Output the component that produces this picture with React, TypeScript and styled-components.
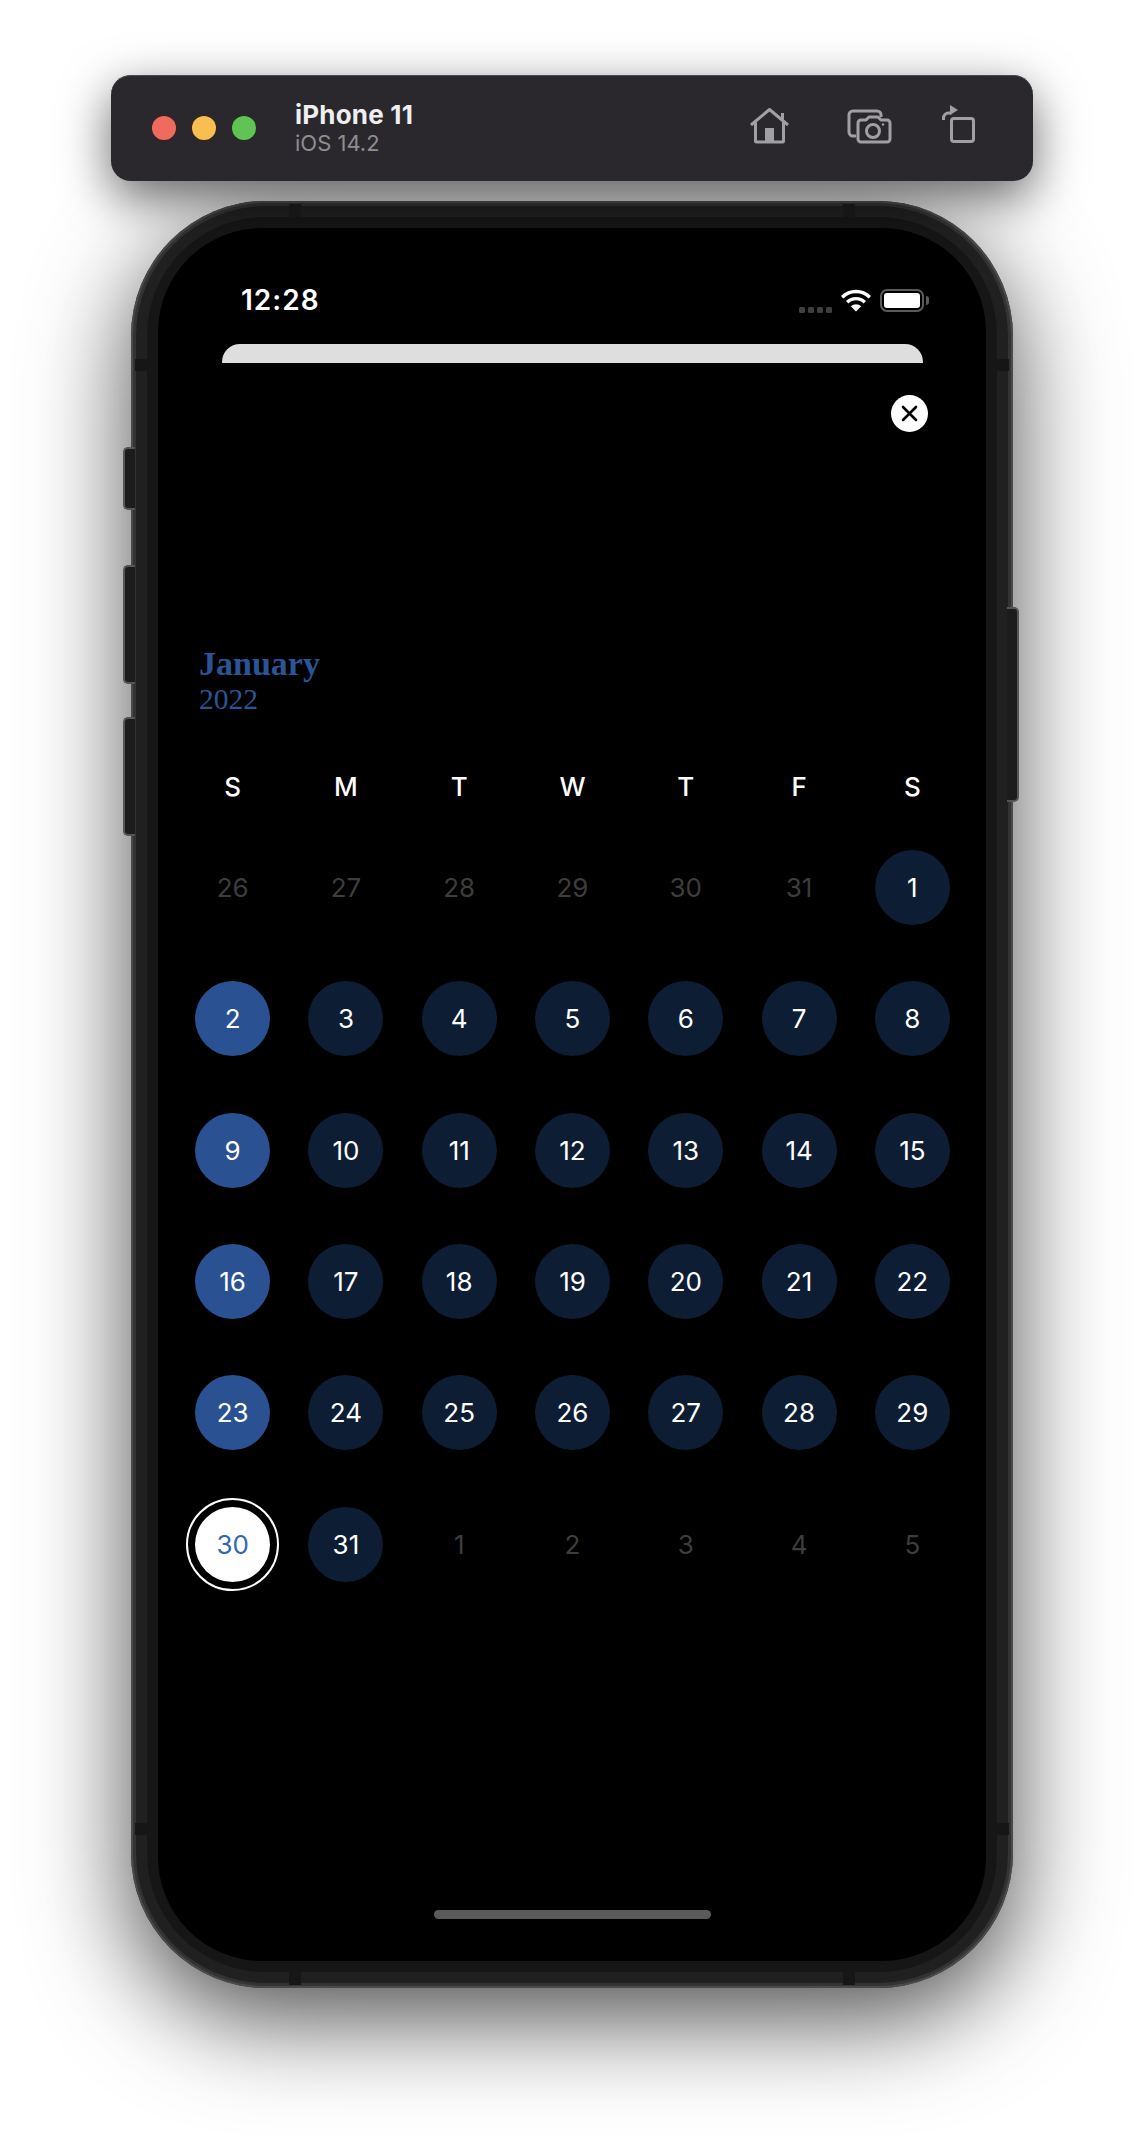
import React from "react";
import styled, { createGlobalStyle } from "styled-components";

const WEEKDAYS = ["S", "M", "T", "W", "T", "F", "S"];

type DayKind = "muted" | "plain" | "selected" | "today";
type Day = { label: number; kind: DayKind };

const buildDays = (): Day[] => {
  const days: Day[] = [];
  [26, 27, 28, 29, 30, 31].forEach((label) => days.push({ label, kind: "muted" }));
  for (let label = 1; label <= 31; label++) {
    let kind: DayKind = "plain";
    if (label === 30) kind = "today";
    else if ([2, 9, 16, 23].includes(label)) kind = "selected";
    days.push({ label, kind });
  }
  [1, 2, 3, 4, 5].forEach((label) => days.push({ label, kind: "muted" }));
  return days;
};

function HomeIcon() {
  return (
    <ToolSvg width="39" height="38" viewBox="0 0 39 38" $gap={0}>
      <path d="M1 20 19.500 4.500 38 20" />
      <path d="M32.500 15V8" />
      <path d="M5.500 17v19a1 1 0 0 0 1 1h26a1 1 0 0 0 1-1V17" />
      <rect x="15" y="23" width="9" height="13" fill="#a09fa2" stroke="none" />
    </ToolSvg>
  );
}

function CameraIcon() {
  return (
    <ToolSvg width="43" height="38" viewBox="0 0 43 38" $gap={59}>
      <path d="M8 31H5a4 4 0 0 1-4-4V10a4 4 0 0 1 4-4h24a4 4 0 0 1 4 4v2" />
      <path d="M13 15h5l3-3h9l3 3h6a3 3 0 0 1 3 3v16a3 3 0 0 1-3 3H13a3 3 0 0 1-3-3V18a3 3 0 0 1 3-3z" />
      <circle cx="25" cy="26" r="6.500" />
      <circle cx="35" cy="19.500" r="1.200" fill="#a09fa2" stroke="none" />
    </ToolSvg>
  );
}

function RotateIcon() {
  return (
    <ToolSvg width="33" height="38" viewBox="0 0 33 38" $gap={51}>
      <rect x="9.500" y="13.500" width="22" height="23" rx="2.500" />
      <path d="M1.500 15v-2a5 5 0 0 1 5-5h3" />
      <path d="M8 0l8 5-8 5z" fill="#a09fa2" stroke="none" />
    </ToolSvg>
  );
}

function WifiIcon() {
  return (
    <svg width="30" height="23" viewBox="0 0 30 23" fill="none">
      <path d="M1.200 8.200a19.500 19.500 0 0 1 27.600 0" stroke="#fff" strokeWidth="3.400" />
      <path d="M6.200 13.200a12.500 12.500 0 0 1 17.600 0" stroke="#fff" strokeWidth="3.400" />
      <path d="M15 22.500 9.800 17.300a7.400 7.400 0 0 1 10.400 0z" fill="#fff" />
    </svg>
  );
}

function CloseIcon() {
  return (
    <svg width="17" height="17" viewBox="0 0 17 17" fill="none">
      <path d="M2 2l13 13M15 2 2 15" stroke="#000" strokeWidth="2.600" strokeLinecap="round" />
    </svg>
  );
}

function App() {
  return (
    <Page>
      <GlobalStyle />
      <Toolbar>
        <Lights>
          <Light $color="#f16a5e" />
          <Light $color="#f6bf4f" />
          <Light $color="#5fc454" />
        </Lights>
        <DeviceInfo>
          <DeviceName>iPhone 11</DeviceName>
          <DeviceOs>iOS 14.2</DeviceOs>
        </DeviceInfo>
        <Actions>
          <HomeIcon />
          <CameraIcon />
          <RotateIcon />
        </Actions>
      </Toolbar>

      <Device>
        <SideButton $side="left" $top={246} $height={63} />
        <SideButton $side="left" $top={364} $height={119} />
        <SideButton $side="left" $top={516} $height={119} />
        <SideButton $side="right" $top={406} $height={195} />
        <AntennaH $edge="top" $left={158} />
        <AntennaH $edge="top" $left={712} />
        <AntennaH $edge="bottom" $left={158} />
        <AntennaH $edge="bottom" $left={712} />
        <AntennaV $side="left" $top={158} />
        <AntennaV $side="right" $top={158} />
        <AntennaV $side="left" $top={1622} />
        <AntennaV $side="right" $top={1622} />

        <Bezel>
          <InnerBezel>
            <Screen>
              <StatusBar>
                <Time>12:28</Time>
                <StatusIcons>
                  <Signal>
                    <SignalDot />
                    <SignalDot />
                    <SignalDot />
                    <SignalDot />
                  </Signal>
                  <WifiIcon />
                  <Battery>
                    <BatteryFill />
                  </Battery>
                </StatusIcons>
              </StatusBar>

              <SheetEdge />

              <CloseRow>
                <CloseButton>
                  <CloseIcon />
                </CloseButton>
              </CloseRow>

              <Heading>
                <Month>January</Month>
                <Year>2022</Year>
              </Heading>

              <Weekdays>
                {WEEKDAYS.map((day, i) => (
                  <Weekday key={i}>{day}</Weekday>
                ))}
              </Weekdays>

              <DayGrid>
                {buildDays().map((day, i) => (
                  <DayCell key={i}>
                    <DayCircle $kind={day.kind}>{day.label}</DayCircle>
                  </DayCell>
                ))}
              </DayGrid>

              <HomeIndicator />
            </Screen>
          </InnerBezel>
        </Bezel>
      </Device>
    </Page>
  );
}

const GlobalStyle = createGlobalStyle`
  html, body {
    margin: 0;
    background: #fff;
  }
  body {
    font-family: Inter, "Liberation Sans", sans-serif;
    overflow: hidden;
  }
`;

const Page = styled.div`
  height: 2138px;
  padding-top: 75px;
  box-sizing: border-box;
  display: flex;
  flex-direction: column;
  align-items: center;
  overflow: hidden;
`;

const Toolbar = styled.div`
  position: relative;
  z-index: 1;
  width: 922px;
  height: 106px;
  box-sizing: border-box;
  padding: 0 58px 0 41px;
  display: flex;
  align-items: center;
  background: #2a282c;
  border-radius: 20px;
  box-shadow: inset 0 1px 0 #4c4a4e, 0 16px 50px rgba(0, 0, 0, 0.6);
`;

const Lights = styled.div`
  display: flex;
  gap: 16px;
`;

const Light = styled.span<{ $color: string }>`
  width: 24px;
  height: 24px;
  border-radius: 50%;
  background: ${(p) => p.$color};
`;

const DeviceInfo = styled.div`
  margin-left: 39px;
  display: flex;
  flex-direction: column;
`;

const DeviceName = styled.div`
  color: #efeff0;
  font-size: 26px;
  line-height: 30px;
  font-weight: 700;
  letter-spacing: 0.2px;
`;

const DeviceOs = styled.div`
  color: #8e8d90;
  font-size: 22px;
  line-height: 27px;
`;

const Actions = styled.div`
  margin-left: auto;
  margin-bottom: 8px;
  display: flex;
`;

const ToolSvg = styled.svg<{ $gap: number }>`
  margin-left: ${(p) => p.$gap}px;
  fill: none;
  stroke: #a09fa2;
  stroke-width: 3;
  stroke-linejoin: round;
  overflow: visible;
`;

const Device = styled.div`
  position: relative;
  margin-top: 20px;
  width: 882px;
  height: 1787px;
  box-sizing: border-box;
  padding: 5px;
  background: #333;
  border-radius: 135px;
  box-shadow: inset 0 0 0 2px #4a4a4a, 0 30px 100px rgba(0, 0, 0, 0.7);
`;

const SideButton = styled.div<{ $side: "left" | "right"; $top: number; $height: number }>`
  position: absolute;
  top: ${(p) => p.$top}px;
  ${(p) => p.$side}: ${(p) => (p.$side === "left" ? -8 : -6)}px;
  width: 12px;
  height: ${(p) => p.$height}px;
  box-sizing: border-box;
  background: #1c1c1c;
  border: 2px solid #555;
  border-${(p) => (p.$side === "left" ? "right" : "left")}: none;
  border-radius: ${(p) => (p.$side === "left" ? "5px 0 0 5px" : "0 5px 5px 0")};
`;

const AntennaH = styled.div<{ $edge: "top" | "bottom"; $left: number }>`
  position: absolute;
  ${(p) => p.$edge}: 3px;
  left: ${(p) => p.$left}px;
  width: 12px;
  height: 13px;
  background: #161616;
  z-index: 1;
`;

const AntennaV = styled.div<{ $side: "left" | "right"; $top: number }>`
  position: absolute;
  ${(p) => p.$side}: 4px;
  top: ${(p) => p.$top}px;
  width: 12px;
  height: 12px;
  background: #161616;
  z-index: 1;
`;

const Bezel = styled.div`
  height: 100%;
  box-sizing: border-box;
  padding: 11px;
  background: #202020;
  border-radius: 130px;
`;

const InnerBezel = styled.div`
  height: 100%;
  box-sizing: border-box;
  padding: 11px;
  background: #161616;
  border-radius: 118px;
`;

const Screen = styled.div`
  height: 100%;
  background: #000;
  border-radius: 104px;
  display: flex;
  flex-direction: column;
`;

const StatusBar = styled.div`
  height: 116px;
  box-sizing: border-box;
  padding: 55px 62px 0 83px;
  display: flex;
  justify-content: space-between;
  align-items: flex-start;
`;

const Time = styled.div`
  color: #fff;
  font-size: 28px;
  line-height: 34px;
  font-weight: 600;
  letter-spacing: 1px;
`;

const StatusIcons = styled.div`
  height: 34px;
  display: flex;
  align-items: center;
  gap: 9px;
`;

const Signal = styled.div`
  display: flex;
  gap: 3px;
  margin-top: 19px;
`;

const SignalDot = styled.span`
  width: 6px;
  height: 6px;
  border-radius: 1.5px;
  background: #3f3f3f;
`;

const Battery = styled.div`
  position: relative;
  width: 44px;
  height: 23px;
  box-sizing: border-box;
  padding: 2px;
  border: 2px solid #5a5a5a;
  border-radius: 7px;
  &::after {
    content: "";
    position: absolute;
    right: -7px;
    top: 5px;
    width: 3px;
    height: 9px;
    background: #5a5a5a;
    border-radius: 0 3px 3px 0;
  }
`;

const BatteryFill = styled.div`
  height: 100%;
  background: #fff;
  border-radius: 3px;
`;

const SheetEdge = styled.div`
  height: 19px;
  margin: 0 63px 0 64px;
  background: #dedede;
  border-radius: 18px 18px 0 0;
`;

const CloseRow = styled.div`
  margin-top: 32px;
  padding-right: 58px;
  display: flex;
  justify-content: flex-end;
`;

const CloseButton = styled.div`
  width: 37px;
  height: 37px;
  border-radius: 50%;
  background: #fff;
  display: flex;
  align-items: center;
  justify-content: center;
`;

const Heading = styled.div`
  margin-top: 213px;
  padding-left: 41px;
  color: #2b5496;
  font-family: "Liberation Serif", serif;
`;

const Month = styled.div`
  font-size: 34px;
  line-height: 37px;
  font-weight: 700;
`;

const Year = styled.div`
  font-size: 29.500px;
  line-height: 35px;
`;

const Weekdays = styled.div`
  margin: 54px 17px 0 18px;
  display: grid;
  grid-template-columns: repeat(7, 1fr);
`;

const Weekday = styled.div`
  color: #fff;
  text-align: center;
  font-size: 26px;
  line-height: 32px;
  font-weight: 500;
`;

const DayGrid = styled.div`
  margin: 18.600px 17px 0 18px;
  display: grid;
  grid-template-columns: repeat(7, 1fr);
  grid-auto-rows: 131.400px;
`;

const DayCell = styled.div`
  display: flex;
  align-items: center;
  justify-content: center;
`;

const DAY_BACKGROUND: Record<DayKind, string> = {
  muted: "transparent",
  plain: "#0d1d33",
  selected: "#2a5192",
  today: "#fff",
};

const DAY_COLOR: Record<DayKind, string> = {
  muted: "#3d3d3d",
  plain: "#fff",
  selected: "#fff",
  today: "#3568ad",
};

const DayCircle = styled.div<{ $kind: DayKind }>`
  position: relative;
  width: 75px;
  height: 75px;
  border-radius: 50%;
  display: flex;
  align-items: center;
  justify-content: center;
  font-size: 26px;
  background: ${(p) => DAY_BACKGROUND[p.$kind]};
  color: ${(p) => DAY_COLOR[p.$kind]};
  ${(p) =>
    p.$kind === "today" &&
    `
    &::before {
      content: "";
      position: absolute;
      inset: -9px;
      border: 2px solid #fff;
      border-radius: 50%;
    }
  `}
`;

const HomeIndicator = styled.div`
  margin: auto auto 42px;
  width: 277px;
  height: 9px;
  border-radius: 5px;
  background: #5a5a5a;
`;

export default App;
